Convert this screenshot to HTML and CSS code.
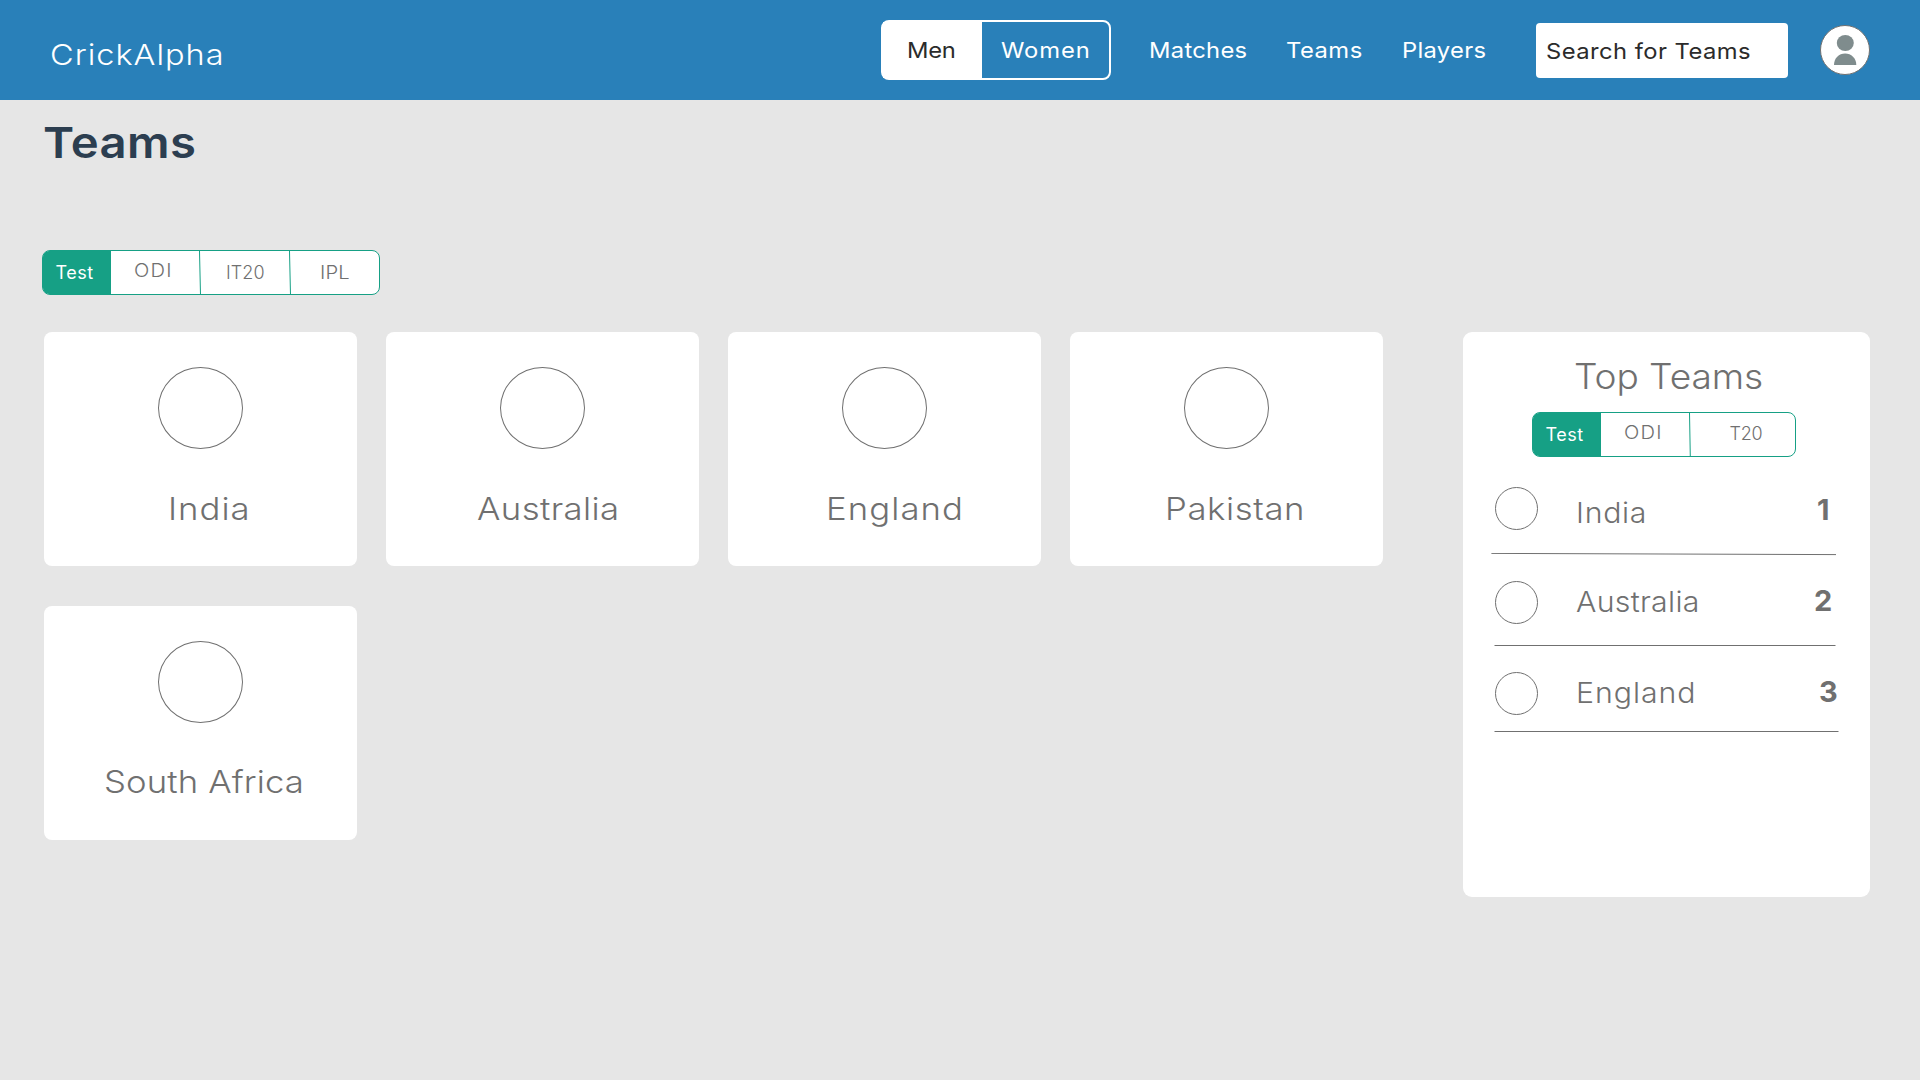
FILE: index.html
```html
<!DOCTYPE html>
<html lang="en">
<head>
<meta charset="utf-8">
<title>CrickAlpha – Teams</title>
<link rel="stylesheet" href="styles.css">
</head>
<body>
<header class="header">
  <div class="brand"><span class="wide">CrickAlpha</span></div>
  <div class="toggle">
    <div class="toggle-item toggle-on"><span class="wide">Men</span></div>
    <div class="toggle-item toggle-off"><span class="wide">Women</span></div>
  </div>
  <nav class="nav">
    <a class="nav-matches"><span class="wide">Matches</span></a>
    <a class="nav-teams"><span class="wide">Teams</span></a>
    <a class="nav-players"><span class="wide">Players</span></a>
  </nav>
  <div class="search"><span class="wide">Search for Teams</span></div>
  <svg class="avatar" viewBox="0 0 50 50">
    <circle cx="25" cy="25" r="24.5" fill="#fff" stroke="#707070"/>
    <ellipse cx="25.3" cy="18" rx="8.5" ry="8" fill="#7f8c8d"/>
    <path d="M14 40C14 33 19 28.5 25.1 28.5S36.3 33 36.3 40Z" fill="#7f8c8d"/>
  </svg>
</header>
<main class="main">
  <h1 class="title"><span class="wide">Teams</span></h1>
  <div class="tabs">
    <div class="tab tab-active">Test</div>
    <div class="tab tab-odi"><span class="wide">ODI</span></div>
    <svg class="divider" viewBox="0 0 2 44"><path d="M.5 0L1.5 44"/></svg>
    <div class="tab tab-it20">IT20</div>
    <svg class="divider" viewBox="0 0 2 44"><path d="M.5 0L1.5 44"/></svg>
    <div class="tab tab-ipl"><span class="wide">IPL</span></div>
  </div>
  <div class="content">
    <section class="cards">
      <article class="card"><div class="flag"></div><div class="name india"><span class="wide">India</span></div></article>
      <article class="card"><div class="flag"></div><div class="name australia"><span class="wide">Australia</span></div></article>
      <article class="card"><div class="flag"></div><div class="name england"><span class="wide">England</span></div></article>
      <article class="card"><div class="flag"></div><div class="name pakistan"><span class="wide">Pakistan</span></div></article>
      <article class="card"><div class="flag"></div><div class="name south-africa"><span class="wide">South Africa</span></div></article>
    </section>
    <aside class="panel">
      <h2 class="panel-title"><span class="wide">Top Teams</span></h2>
      <div class="tabs panel-tabs">
        <div class="tab tab-active">Test</div>
        <div class="tab tab-odi"><span class="wide">ODI</span></div>
        <svg class="divider" viewBox="0 0 2 44"><path d="M.5 0L1.3 44"/></svg>
        <div class="tab tab-t20">T20</div>
      </div>
      <div class="row row-1">
        <div class="row-flag"></div><div class="row-name"><span class="wide">India</span></div><div class="rank">1</div>
      </div>
      <svg class="rule" viewBox="0 0 407 3"><path d="M28.4 .4L373 1.6"/></svg>
      <div class="row row-2">
        <div class="row-flag"></div><div class="row-name"><span class="wide">Australia</span></div><div class="rank">2</div>
      </div>
      <svg class="rule" viewBox="0 0 407 3"><path d="M31.5 .5H372.5"/></svg>
      <div class="row row-3">
        <div class="row-flag"></div><div class="row-name"><span class="wide">England</span></div><div class="rank">3</div>
      </div>
      <svg class="rule" viewBox="0 0 407 3"><path d="M31.5 .5H375.5"/></svg>
    </aside>
  </div>
</main>
</body>
</html>
```
FILE: styles.css
```css
* { box-sizing: border-box; }

body {
  --stretch: 1.12;
  margin: 0;
  min-height: 1080px;
  background: #e6e6e6;
  color: #707070;
  font-family: Inter, "Noto Sans", sans-serif;
}

/* Broad letterforms */
.wide {
  display: inline-block;
  white-space: nowrap;
  transform: scaleX(var(--stretch));
  transform-origin: left center;
}

/* Header */
.header {
  --stretch: 1.08;
  display: flex;
  align-items: center;
  height: 100px;
  padding: 0 50px 0 49.5px;
  background: #2980b9;
  color: #fff;
  font-size: 22px;
}
.brand {
  --stretch: 1.12;
  padding-top: 9px;
  margin-right: auto;
  font-size: 29px;
  font-weight: 300;
  letter-spacing: .9px;
}
.toggle {
  display: flex;
  width: 230px;
  height: 60px;
  margin-right: 38px;
  border: 2px solid #fff;
  border-radius: 8px;
  line-height: 56px;
}
.toggle-on {
  width: 99px;
  padding-left: 24px;
  background: #fff;
  color: #2b2b2b;
  letter-spacing: -.29px;
}
.toggle-off { padding-left: 19px; letter-spacing: .83px; }
.nav { display: flex; width: 387px; }
.nav-matches { width: 137px; letter-spacing: .27px; }
.nav-teams { width: 115.5px; letter-spacing: .45px; }
.nav-players { letter-spacing: .28px; }
.search {
  width: 252px;
  height: 55px;
  margin: 1px 32px 0 0;
  padding-left: 10px;
  border-radius: 4px;
  background: #fff;
  color: #2b2b2b;
  line-height: 56px;
  letter-spacing: .42px;
}
.avatar { width: 50px; height: 50px; }

/* Page */
.main { padding: 17px 50px 0 44px; }
.title {
  --stretch: 1.1;
  margin: 0 0 83px -1px;
  color: #2c3e50;
  font-size: 43px;
  font-weight: 600;
  line-height: 50px;
  letter-spacing: .3px;
}

/* Format tabs */
.tabs {
  display: flex;
  width: 338px;
  height: 45px;
  margin-left: -2px;
  border: 1px solid #16a085;
  border-radius: 8px;
  background: #fff;
  font-size: 18px;
  font-weight: 300;
  line-height: 43px;
}
.tab { width: 88px; }
.tab-active {
  width: 68px;
  padding-left: 12.5px;
  border-radius: 6px 0 0 6px;
  background: #16a085;
  color: #fff;
  font-weight: 400;
  letter-spacing: .5px;
}
.tab-odi { padding-left: 23px; line-height: 39px; letter-spacing: 1.07px; }
.tab-it20 { padding-left: 25px; letter-spacing: .1px; }
.tab-ipl { padding-left: 29px; letter-spacing: .17px; }
.tab-t20 { padding-left: 38.5px; line-height: 42px; letter-spacing: -.25px; }
.divider {
  width: 2px;
  height: 44px;
  fill: none;
  stroke: #16a085;
}

/* Team cards */
.content { display: flex; gap: 80px; margin-top: 37px; align-items: flex-start; }
.cards {
  display: grid;
  grid-template-columns: repeat(4, 313px);
  grid-auto-rows: 234px;
  gap: 40px 29px;
}
.card { padding-top: 35px; border-radius: 8px; background: #fff; }
.flag {
  width: 85px;
  height: 82px;
  margin: 0 auto 40px;
  border: 1px solid #707070;
  border-radius: 50%;
}
.name { font-size: 31px; font-weight: 300; line-height: 40px; }
.india { padding-left: 123.5px; letter-spacing: .91px; }
.australia { padding-left: 91px; letter-spacing: .36px; }
.england { padding-left: 97.5px; letter-spacing: .96px; }
.pakistan { padding-left: 94.5px; letter-spacing: .54px; }
.south-africa { margin-top: -1px; padding-left: 59.5px; letter-spacing: .1px; }

/* Ranking panel */
.panel {
  --stretch: 1.08;
  width: 407px;
  height: 565px;
  padding-top: 23px;
  border-radius: 9px;
  background: #fff;
}
.panel-title {
  --stretch: 1.06;
  margin: 0 0 14px;
  padding-left: 110.5px;
  font-size: 35px;
  font-weight: 300;
  line-height: 43px;
  letter-spacing: -.08px;
}
.panel-tabs { --stretch: 1.12; width: 264px; margin-left: 69px; }
.row {
  display: grid;
  grid-template-columns: 43px 1fr 20px;
  column-gap: 38px;
  align-items: start;
  padding: 0 36px 0 32px;
  line-height: 32px;
}
.row-flag { height: 43px; border: 1px solid #707070; border-radius: 50%; }
.row-name { font-size: 28px; font-weight: 300; }
.rank { font-size: 29px; font-weight: 700; }
.row-1 { height: 96px; padding-top: 30px; }
.row-1 .row-name { margin-top: 10px; letter-spacing: .65px; }
.row-1 .rank { margin: 7px 0 0 3px; }
.row-2 { height: 89px; padding-top: 25px; }
.row-2 .row-name { margin-top: 5px; letter-spacing: .27px; }
.row-2 .rank { margin-top: 4px; }
.row-3 { height: 83px; padding-top: 24px; }
.row-3 .row-name { margin-top: 5px; letter-spacing: .9px; }
.row-3 .rank { margin: 4px 0 0 5px; }
.rule { display: block; width: 407px; height: 3px; fill: none; stroke: #707070; }
```
